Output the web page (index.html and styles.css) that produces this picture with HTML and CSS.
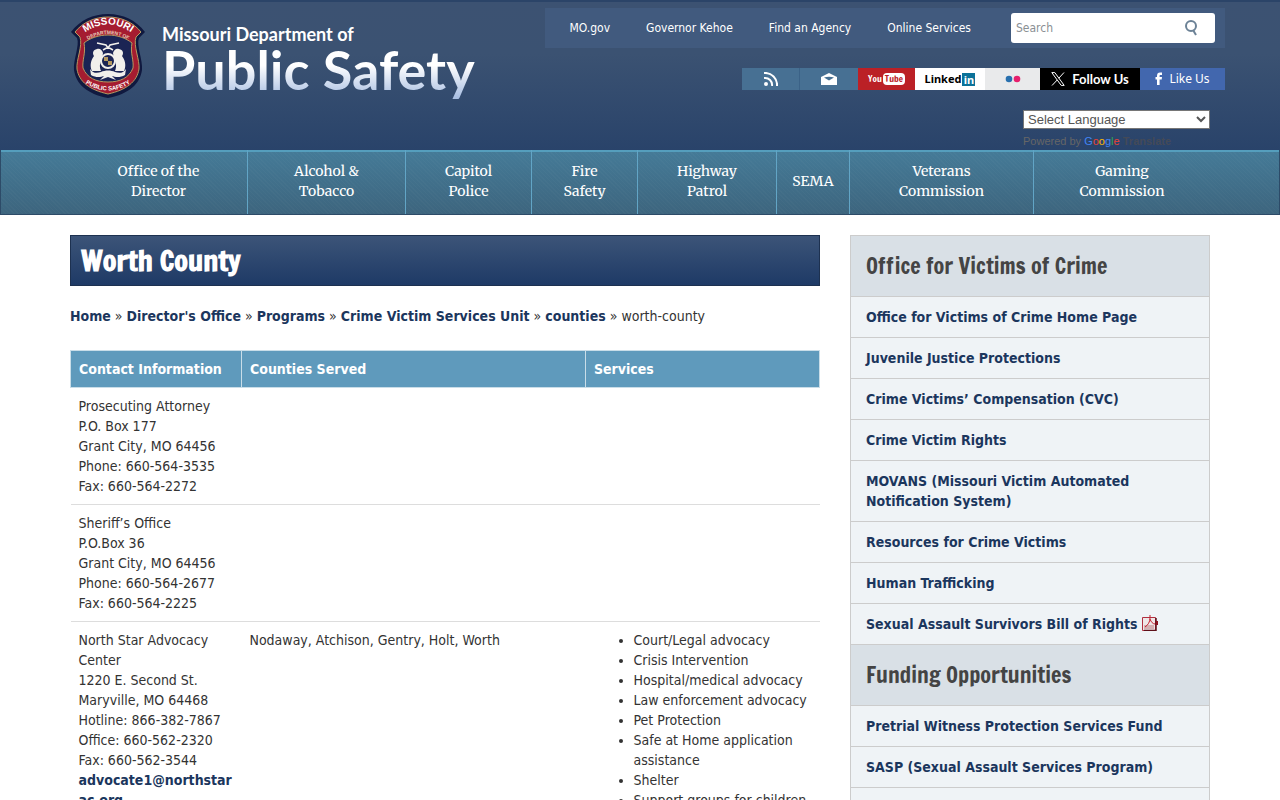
FILE: index.html
```html
<!DOCTYPE html>
<html lang="en">
<head>
    <meta charset="UTF-8">
    <meta name="viewport" content="width=device-width, initial-scale=1.0">
    <title>Worth County | Missouri Department of Public Safety</title>
    <link rel="stylesheet" href="styles.css">
</head>
<body>
    <header class="site-header">
        <div class="container header-inner">
            <a class="brand" href="#">
                <svg class="seal" width="76" height="86" viewBox="0 0 76 86" aria-hidden="true">
                    <path d="M38 1C23 1 10 7 1 19l6 6c3 7-4 22-3 32 2 14 13 24 34 28 21-4 32-14 34-28 1-10-6-25-3-32l6-6C66 7 53 1 38 1z" fill="#10193f"/>
                    <path d="M38 4C25 4 13 9 5 19l5 5c3 9-4 23-3 32 2 13 13 21 31 25 18-4 29-12 31-25 1-9-6-23-3-32l5-5C63 9 51 4 38 4z" fill="#a51c30" stroke="#b59a61" stroke-width="1"/>
                    <path d="M38 22c-9 0-18 3-24 8 2 10-2 17-1 25 4 10 13 14 25 14s21-4 25-14c1-8-3-15-1-25-6-5-15-8-24-8z" fill="#1b2454" stroke="#b59a61" stroke-width="1"/>
                    <path d="M27 36c-4 1-5 4-3 7-4 5-4 11-2 15h9c-2-5-1-8 1-12l1-6c-1-3-3-5-6-4zM49 36c4 1 5 4 3 7 4 5 4 11 2 15h-9c2-5 1-8-1-12l-1-6c1-3 3-5 6-4z" fill="#f2f0ec"/>
                    <path d="M27 30l9 2 2 3 2-3 9-2M33 37l5-3 5 3" fill="none" stroke="#f2f0ec" stroke-width="1.500"/>
                    <circle cx="38" cy="48" r="7" fill="#1b2454" stroke="#f2f0ec" stroke-width="2"/>
                    <path d="M34 44h4v4h-4zM38 48h4v4h-4z" fill="#b59a61"/>
                    <path d="M20 56c3 5 8 4 11 3 4-2 10-2 14 0 3 1 8 2 11-3l-1 6c-5 3-10 2-13 1l4 4-8-3-8 3 4-4c-3 1-8 2-13-1z" fill="#f2f0ec"/>
                    <path id="seal-top" d="M9 24Q38-1 67 24" fill="none"/>
                    <path id="seal-dept" d="M14 29Q38 13 62 29" fill="none"/>
                    <path id="seal-bottom" d="M11 67Q38 88 65 67" fill="none"/>
                    <text class="seal-title"><textPath href="#seal-top" startOffset="50%">MISSOURI</textPath></text>
                    <text class="seal-small"><textPath href="#seal-dept" startOffset="50%">DEPARTMENT OF</textPath></text>
                    <text class="seal-foot"><textPath href="#seal-bottom" startOffset="50%">PUBLIC SAFETY</textPath></text>
                </svg>
                <span class="brand-text">
                    <span class="brand-small">Missouri Department of</span>
                    <span class="brand-large">Public Safety</span>
                </span>
            </a>

            <div class="header-tools">
                <div class="utility">
                    <nav class="utility-links" aria-label="State links">
                        <a href="#">MO.gov</a>
                        <a href="#">Governor Kehoe</a>
                        <a href="#">Find an Agency</a>
                        <a href="#">Online Services</a>
                    </nav>
                    <form class="search">
                        <input type="search" placeholder="Search" aria-label="Search">
                        <button type="button" aria-label="Submit search">
                            <svg width="14" height="16" viewBox="0 0 14 16" fill="none" stroke="#6c8296" stroke-width="2"><circle cx="6" cy="6" r="5"/><path d="M8 10l3 5"/></svg>
                        </button>
                    </form>
                </div>

                <div class="social">
                    <a class="rss" href="#" aria-label="RSS">
                        <svg width="14" height="14" viewBox="0 0 14 14" fill="none" stroke="#fff" stroke-width="2"><circle cx="2" cy="12" r="1" fill="#fff"/><path d="M0 6a7 7 0 0 1 8 8M0 1a12 12 0 0 1 13 13"/></svg>
                    </a>
                    <a class="mail" href="#" aria-label="Email">
                        <svg width="16" height="14" viewBox="0 0 16 14"><path d="M0 5l8-4 8 4v8H0z" fill="#fff"/><path d="M3 5.500c3-1 7-1 10 0L8 8.500z" fill="#477093"/></svg>
                    </a>
                    <a class="youtube" href="#">You<span>Tube</span></a>
                    <a class="linkedin" href="#">Linked<span>in</span></a>
                    <a class="flickr" href="#" aria-label="Flickr">
                        <svg width="16" height="8" viewBox="0 0 16 8"><circle cx="4" cy="4" r="3.300" fill="#2870ae"/><circle cx="12" cy="4" r="3.300" fill="#e7206d"/></svg>
                    </a>
                    <a class="twitter" href="#">
                        <svg width="14" height="14" viewBox="0 0 14 14" fill="none" stroke="#fff"><path d="M.8.600h3l9.400 12.800h-3zM13 .500L7.800 6.200M6.200 8L1 13.500"/></svg>
                        Follow Us
                    </a>
                    <a class="facebook" href="#">
                        <svg width="8" height="14" viewBox="0 0 8 14"><path d="M2 13V7.500H.5V5H2V4c0-2.500 1-3.500 3-3.500h2V3H5.500C4.800 3 4.600 3.300 4.600 4v1H7l-.3 2.500H4.600V13z" fill="#fff"/></svg>
                        Like Us
                    </a>
                </div>

                <div class="translate">
                    <select aria-label="Select Language">
                        <option>Select Language</option>
                    </select>
                    <p>Powered by <span class="google"><i class="g-blue">G</i><i class="g-red">o</i><i class="g-yellow">o</i><i class="g-blue">g</i><i class="g-green">l</i><i class="g-red">e</i></span> <b>Translate</b></p>
                </div>
            </div>
        </div>
    </header>

    <nav class="main-nav" aria-label="Main">
        <div class="container main-nav-inner">
            <a href="#">Office of the<br>Director</a>
            <a href="#">Alcohol &amp;<br>Tobacco</a>
            <a href="#">Capitol<br>Police</a>
            <a href="#">Fire<br>Safety</a>
            <a href="#">Highway<br>Patrol</a>
            <a href="#">SEMA</a>
            <a href="#">Veterans<br>Commission</a>
            <a href="#">Gaming<br>Commission</a>
        </div>
    </nav>

    <div class="container page">
        <main class="content">
            <h1>Worth County</h1>
            <p class="breadcrumbs"><a href="#">Home</a> » <a href="#">Director's Office</a> » <a href="#">Programs</a> » <a href="#">Crime Victim Services Unit</a> » <a href="#">counties</a> » worth-county</p>

            <table class="services">
                <colgroup>
                    <col class="col-contact">
                    <col class="col-counties">
                    <col class="col-services">
                </colgroup>
                <thead>
                    <tr>
                        <th scope="col">Contact Information</th>
                        <th scope="col">Counties Served</th>
                        <th scope="col">Services</th>
                    </tr>
                </thead>
                <tbody>
                    <tr>
                        <td>Prosecuting Attorney<br>P.O. Box 177<br>Grant City, MO 64456<br>Phone: 660-564-3535<br>Fax: 660-564-2272</td>
                        <td></td>
                        <td></td>
                    </tr>
                    <tr>
                        <td>Sheriff’s Office<br>P.O.Box 36<br>Grant City, MO 64456<br>Phone: 660-564-2677<br>Fax: 660-564-2225</td>
                        <td></td>
                        <td></td>
                    </tr>
                    <tr>
                        <td>North Star Advocacy Center<br>1220 E. Second St.<br>Maryville, MO 64468<br>Hotline: 866-382-7867<br>Office: 660-562-2320<br>Fax: 660-562-3544<br><a href="#">advocate1@northstar<wbr>ac.org</a></td>
                        <td>Nodaway, Atchison, Gentry, Holt, Worth</td>
                        <td>
                            <ul>
                                <li>Court/Legal advocacy</li>
                                <li>Crisis Intervention</li>
                                <li>Hospital/medical advocacy</li>
                                <li>Law enforcement advocacy</li>
                                <li>Pet Protection</li>
                                <li>Safe at Home application assistance</li>
                                <li>Shelter</li>
                                <li>Support groups for children</li>
                            </ul>
                        </td>
                    </tr>
                </tbody>
            </table>
        </main>

        <aside class="sidebar">
            <h2>Office for Victims of Crime</h2>
            <ul>
                <li><a href="#">Office for Victims of Crime Home Page</a></li>
                <li><a href="#">Juvenile Justice Protections</a></li>
                <li><a href="#">Crime Victims’ Compensation (CVC)</a></li>
                <li><a href="#">Crime Victim Rights</a></li>
                <li><a href="#">MOVANS (Missouri Victim Automated Notification System)</a></li>
                <li><a href="#">Resources for Crime Victims</a></li>
                <li><a href="#">Human Trafficking</a></li>
                <li><a href="#">Sexual Assault Survivors Bill of Rights
                    <svg class="pdf" width="16" height="16" viewBox="0 0 16 16" aria-hidden="true"><path d="M.5 2.500h13v13H.5z" fill="#efe6e7" stroke="#b03040"/><path d="M2 10h10v4H2z" fill="#d5b0b3"/><path d="M14 3v12.500H2" fill="none" stroke="#5c0f18" stroke-width="1.500"/><path d="M14 6h2v4h-2z" fill="#8c1420"/><path d="M8 0v3c0 4-2 7-5 9M8 4c1 3 3 5 5 5" fill="none" stroke="#c5202e"/></svg></a></li>
            </ul>
            <h2>Funding Opportunities</h2>
            <ul>
                <li><a href="#">Pretrial Witness Protection Services Fund</a></li>
                <li><a href="#">SASP (Sexual Assault Services Program)</a></li>
            </ul>
        </aside>
    </div>
</body>
</html>
```
FILE: styles.css
```css
:root {
    --navy: #1b365d;
    --text-color: #333;
    --border: #ccc;
    --body-font: Tahoma, "DejaVu Sans Condensed", "Noto Sans", sans-serif;
    --ui-font: "Noto Sans", "Open Sans", sans-serif;
    --heading-font: "Francois One", "Liberation Sans Narrow", "DejaVu Sans Condensed", sans-serif;
}

* {
    box-sizing: border-box;
}

body {
    margin: 0;
    font-family: var(--body-font);
    font-size: 14px;
    line-height: 20px;
    color: var(--text-color);
    background: #fff;
}

a {
    color: var(--navy);
    text-decoration: none;
    font-weight: bold;
}

.container {
    max-width: 1140px;
    margin: 0 auto;
}

/* Header */
.site-header {
    background: linear-gradient(#3c5272 0, #3b5272 35%, #29436a 100%);
    border-top: 2px solid #2b4468;
}

.header-inner {
    display: flex;
    justify-content: space-between;
    min-height: 148px;
}

.brand {
    display: flex;
    align-items: flex-start;
    gap: 16px;
    padding-top: 11px;
}

.brand-text {
    display: flex;
    flex-direction: column;
    padding-top: 10px;
    font-family: "Century Gothic", Lato, sans-serif;
    color: #fff;
    white-space: nowrap;
}

.brand-small {
    font-size: 18px;
    line-height: 22px;
}

.brand-large {
    font-size: 54px;
    line-height: 50px;
    padding-bottom: 8px;
    background: linear-gradient(#fff 35%, #a9bfe2 90%);
    background-clip: text;
    -webkit-background-clip: text;
    color: transparent;
}

.seal text {
    font-family: "Liberation Sans", sans-serif;
    font-weight: bold;
    fill: #fff;
    text-anchor: middle;
}

.seal .seal-title {
    font-size: 10px;
}

.seal .seal-small {
    font-size: 5px;
    fill: #e5c9b8;
}

.seal .seal-foot {
    font-size: 6px;
}

.header-tools {
    display: flex;
    flex-direction: column;
    align-items: flex-end;
    padding-top: 6px;
    margin-right: -15px;
}

.utility {
    display: flex;
    align-items: center;
    gap: 40px;
    height: 40px;
    padding: 0 10px 0 24px;
    background: #415a7e;
}

.utility-links {
    display: flex;
    gap: 36px;
}

.utility-links a {
    font-size: 12px;
    font-weight: normal;
    color: #fff;
}

.search {
    display: flex;
    align-items: center;
    width: 204px;
    height: 30px;
    padding: 0 16px 0 5px;
    background: #fff;
    border-radius: 3px;
}

.search input {
    flex: 1;
    min-width: 0;
    padding: 0;
    border: 0;
    outline: 0;
    background: none;
    font-family: inherit;
    font-size: 12px;
}

.search input::placeholder {
    color: #8a8f94;
}

.search button {
    display: flex;
    padding: 0;
    border: 0;
    background: none;
    cursor: pointer;
}

.social {
    display: flex;
    margin-top: 20px;
}

.social a {
    display: flex;
    align-items: center;
    justify-content: center;
    height: 22px;
    font-family: var(--ui-font);
    font-size: 12px;
    font-weight: normal;
    color: #fff;
}

.social .rss,
.social .mail {
    width: 58px;
    background: #477093;
}

.social .rss {
    border-right: 1px solid #3b6287;
}

.social .youtube {
    width: 57px;
    gap: 1px;
    background: #bb2026;
    font-family: var(--heading-font);
    font-size: 9px;
}

.youtube span {
    padding: 0 2px;
    border-radius: 4px;
    line-height: 12px;
    background: #fff;
    color: #bb2026;
}

.social .linkedin {
    width: 70px;
    gap: 1px;
    background: #fff;
    font-size: 11px;
    font-weight: bold;
    color: #000;
}

.linkedin span {
    width: 13px;
    line-height: 13px;
    text-align: center;
    background: #0b7299;
    color: #fff;
}

.social .flickr {
    width: 55px;
    background: #e9eaeb;
}

.social .twitter {
    width: 100px;
    gap: 7px;
    background: #000;
    font-family: Lato, sans-serif;
    font-size: 13px;
    font-weight: bold;
}

.social .facebook {
    width: 85px;
    gap: 6px;
    background: #4267ae;
}

.translate {
    width: 187px;
    margin: 20px 15px 0 0;
    font-family: "Liberation Sans", Arial, sans-serif;
}

.translate select {
    display: block;
    width: 100%;
    height: 19px;
    padding: 0;
    border: 1px solid #767676;
    border-radius: 0;
    background-color: #fff;
    font-family: inherit;
    font-size: 13px;
    color: #555;
}

.translate p {
    margin: 3px 0 0;
    font-size: 11px;
    line-height: 18px;
    color: #666;
}

.google i {
    font-style: normal;
}

.g-blue {
    color: #4285f4;
}

.g-red {
    color: #ea4335;
}

.g-yellow {
    color: #fbbc05;
}

.g-green {
    color: #34a853;
}

.translate b {
    color: #444a58;
}

/* Main navigation */
.main-nav {
    background: repeating-linear-gradient(45deg, rgba(255, 255, 255, 0.02) 0 1px, transparent 1px 3px), linear-gradient(#457b98, #3d657e);
    border: 1px solid #2d4b68;
    border-top: 0;
    box-shadow: inset 0 2px #559ebd;
}

.main-nav-inner {
    display: grid;
    grid-template-columns: 178fr 158fr 126fr 106fr 139fr 73fr 184fr 176fr;
    height: 64px;
}

.main-nav a {
    display: flex;
    align-items: center;
    justify-content: center;
    padding-bottom: 2px;
    font-family: Merriweather, "DejaVu Serif Condensed", "Liberation Serif", serif;
    font-size: 14px;
    font-weight: normal;
    text-align: center;
    color: #fff;
    border-right: 1px solid #62a5c6;
}

.main-nav a:last-child {
    border-right: 0;
}

/* Page */
.page {
    display: grid;
    grid-template-columns: 25fr 12fr;
    gap: 30px;
    align-items: start;
    padding-top: 20px;
}

h1,
h2 {
    margin: 0;
    font-family: var(--heading-font);
    font-weight: normal;
}

h1 {
    padding: 10px;
    border: 1px solid #1d3150;
    background: linear-gradient(#3c5478, #1e3a66);
    font-size: 28px;
    font-weight: bold;
    line-height: 29px;
    color: #fff;
}

.breadcrumbs {
    margin: 20px 0 24px;
}

.services {
    width: 100%;
    table-layout: fixed;
    border-collapse: collapse;
}

.col-contact {
    width: 171px;
}

.col-services {
    width: 234px;
}

.services th,
.services td {
    padding: 8px;
    text-align: left;
    vertical-align: top;
    border-bottom: 1px solid #ddd;
    overflow-wrap: break-word;
}

.services th {
    background: #5f9abc;
    border: 1px solid #c9dde8;
    color: #fff;
}

.services ul {
    margin: 0;
    padding-left: 40px;
}

/* Sidebar */
.sidebar {
    padding-bottom: 40px;
    background: #eff3f6;
    border: 1px solid var(--border);
}

.sidebar h2 {
    padding: 20px 15px;
    border-bottom: 1px solid var(--border);
    background: #d9e0e6;
    font-size: 22px;
    line-height: 20px;
    color: #444;
}

.sidebar ul {
    margin: 0;
    padding: 0;
    list-style: none;
}

.sidebar li {
    padding: 10px 15px;
    border-bottom: 1px solid var(--border);
}

.pdf {
    vertical-align: -2px;
}

@media (max-width: 900px) {
    .header-inner {
        flex-wrap: wrap;
    }

    .page {
        grid-template-columns: 1fr;
    }
}
```
